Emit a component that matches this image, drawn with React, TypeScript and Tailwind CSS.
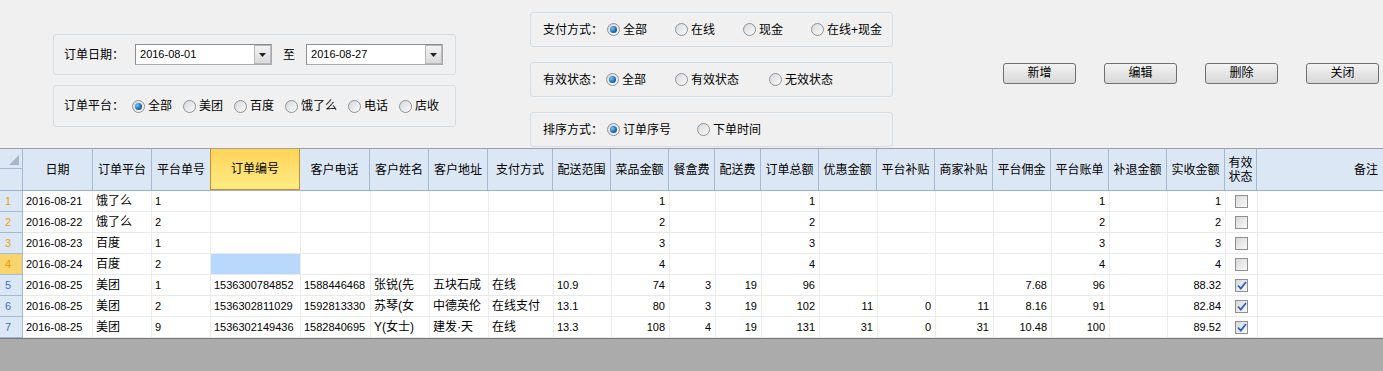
import React from 'react';

type Col = { t: string; w: number; align?: 'l' | 'r' };

const cols: Col[] = [
  { t: '日期', w: 70 },
  { t: '订单平台', w: 59 },
  { t: '平台单号', w: 59 },
  { t: '订单编号', w: 90 },
  { t: '客户电话', w: 70 },
  { t: '客户姓名', w: 59 },
  { t: '客户地址', w: 59 },
  { t: '支付方式', w: 65 },
  { t: '配送范围', w: 58 },
  { t: '菜品金额', w: 58, align: 'r' },
  { t: '餐盒费', w: 46, align: 'r' },
  { t: '配送费', w: 46, align: 'r' },
  { t: '订单总额', w: 58, align: 'r' },
  { t: '优惠金额', w: 58, align: 'r' },
  { t: '平台补贴', w: 58, align: 'r' },
  { t: '商家补贴', w: 58, align: 'r' },
  { t: '平台佣金', w: 58, align: 'r' },
  { t: '平台账单', w: 58, align: 'r' },
  { t: '补退金额', w: 58, align: 'r' },
  { t: '实收金额', w: 58, align: 'r' },
];

const rows: { cells: string[]; ok: boolean }[] = [
  { cells: ['2016-08-21', '饿了么', '1', '', '', '', '', '', '', '1', '', '', '1', '', '', '', '', '1', '', '1'], ok: false },
  { cells: ['2016-08-22', '饿了么', '2', '', '', '', '', '', '', '2', '', '', '2', '', '', '', '', '2', '', '2'], ok: false },
  { cells: ['2016-08-23', '百度', '1', '', '', '', '', '', '', '3', '', '', '3', '', '', '', '', '3', '', '3'], ok: false },
  { cells: ['2016-08-24', '百度', '2', '', '', '', '', '', '', '4', '', '', '4', '', '', '', '', '4', '', '4'], ok: false },
  { cells: ['2016-08-25', '美团', '1', '1536300784852', '1588446468', '张锐(先', '五块石成', '在线', '10.9', '74', '3', '19', '96', '', '', '', '7.68', '96', '', '88.32'], ok: true },
  { cells: ['2016-08-25', '美团', '2', '1536302811029', '1592813330', '苏琴(女', '中德英伦', '在线支付', '13.1', '80', '3', '19', '102', '11', '0', '11', '8.16', '91', '', '82.84'], ok: true },
  { cells: ['2016-08-25', '美团', '9', '1536302149436', '1582840695', 'Y(女士)', '建发·天', '在线', '13.3', '108', '4', '19', '131', '31', '0', '31', '10.48', '100', '', '89.52'], ok: true },
];

function Radio({ checked }: { checked?: boolean }) {
  return (
    <span className="flex h-[13px] w-[13px] shrink-0 items-center justify-center rounded-full border border-[#8d9196] bg-gradient-to-br from-[#d6d8db] to-[#fbfbfb]">
      {checked && <span className="h-[7px] w-[7px] rounded-full bg-[radial-gradient(circle_at_35%_35%,#7cc4f4,#1566b0_60%,#0b3f7a)]" />}
    </span>
  );
}

function RadioItem({ label, checked, w }: { label: string; checked?: boolean; w?: string }) {
  return (
    <div className={`flex items-center gap-[3px] ${w ?? ''}`}>
      <Radio checked={checked} />
      <span>{label}</span>
    </div>
  );
}

function FilterBox({ children, h }: { children: React.ReactNode; h: string }) {
  return (
    <div className={`flex items-center rounded-[3px] border border-[#d3dde6] bg-[#f0f0f0] ${h}`}>
      {children}
    </div>
  );
}

function DateInput({ value }: { value: string }) {
  return (
    <div className="flex h-[21px] w-[137px] items-stretch border border-[#a7abb0] border-l-[#8a8f96] border-t-[#8a8f96] bg-white">
      <span className="flex-1 pl-[4px] text-[11px] leading-[19px]">{value}</span>
      <span className="flex w-[17px] items-center justify-center border border-[#b4b8bd] bg-gradient-to-b from-[#f4f4f4] to-[#d9d9d9]">
        <svg width="7" height="4" viewBox="0 0 7 4"><path d="M0 0h7L3.5 4z" fill="#222" /></svg>
      </span>
    </div>
  );
}

function Btn({ label }: { label: string }) {
  return (
    <button className="h-[21px] w-[73px] rounded-[3px] border border-[#707070] bg-gradient-to-b from-[#f3f3f3] to-[#d8d8d8] text-[12px] leading-[19px] text-black">
      {label}
    </button>
  );
}

function Check({ on }: { on: boolean }) {
  return (
    <span className="flex h-[13px] w-[13px] items-center justify-center border border-[#8f8f8f] bg-gradient-to-br from-[#d8d8d8] to-[#fafafa]">
      {on && (
        <svg width="10" height="9" viewBox="0 0 10 9">
          <path d="M1 4.5 L3.8 7.5 L9 1" stroke="#2e5ec4" strokeWidth="1.8" fill="none" />
        </svg>
      )}
    </span>
  );
}

export default function App() {
  return (
    <div className="flex h-[371px] w-[1383px] flex-col overflow-hidden bg-[#f0f0f0] font-['Liberation_Sans','Noto_Sans_CJK_SC',sans-serif] text-[12px] text-black">
      {/* Filters */}
      <div className="flex h-[148px] shrink-0 items-start">
        <div className="ml-[53px] mt-[34px] flex w-[403px] flex-col gap-[10px]">
          <FilterBox h="h-[41px]">
            <span className="ml-[10px] mr-[11px]">订单日期：</span>
            <DateInput value="2016-08-01" />
            <span className="mx-[11px]">至</span>
            <DateInput value="2016-08-27" />
          </FilterBox>
          <FilterBox h="h-[42px]">
            <span className="ml-[10px] mr-[8px]">订单平台：</span>
            <div className="flex items-center gap-[11px]">
              <RadioItem label="全部" checked />
              <RadioItem label="美团" />
              <RadioItem label="百度" />
              <RadioItem label="饿了么" />
              <RadioItem label="电话" />
              <RadioItem label="店收" />
            </div>
          </FilterBox>
        </div>

        <div className="ml-[74px] mt-[12px] flex w-[363px] flex-col gap-[15px]">
          <FilterBox h="h-[35px]">
            <span className="ml-[12px] mr-[4px]">支付方式：</span>
            <RadioItem label="全部" checked w="w-[68px]" />
            <RadioItem label="在线" w="w-[68px]" />
            <RadioItem label="现金" w="w-[68px]" />
            <RadioItem label="在线+现金" />
          </FilterBox>
          <FilterBox h="h-[35px]">
            <span className="ml-[12px] mr-[3px]">有效状态：</span>
            <RadioItem label="全部" checked w="w-[69px]" />
            <RadioItem label="有效状态" w="w-[94px]" />
            <RadioItem label="无效状态" />
          </FilterBox>
          <FilterBox h="h-[35px]">
            <span className="ml-[12px] mr-[4px]">排序方式：</span>
            <RadioItem label="订单序号" checked w="w-[90px]" />
            <RadioItem label="下单时间" />
          </FilterBox>
        </div>

        <div className="ml-[110px] mt-[63px] flex gap-[28px]">
          <Btn label="新增" />
          <Btn label="编辑" />
          <Btn label="删除" />
          <Btn label="关闭" />
        </div>
      </div>

      {/* Grid */}
      <div className="shrink-0 border-t border-[#a0a0a0] bg-white">
        <div className="flex h-[42px] border-b border-[#9cb0c9] bg-[#dce7f5]">
          <div className="flex w-[23px] shrink-0 flex-col border-r border-[#a5b9d2]">
            <div className="flex h-[20px] items-end justify-end border-b border-[#a5b9d2] pb-[3px] pr-[3px]">
              <svg width="10" height="10" viewBox="0 0 10 10"><path d="M10 0V10H0z" fill="#a7b7cb" /></svg>
            </div>
            <div className="flex-1" />
          </div>
          {cols.map((c) => (
            <div
              key={c.t}
              style={{ width: c.w }}
              className={`flex shrink-0 items-center justify-center border-r ${
                c.t === '订单编号'
                  ? 'border-l border-b border-[#c8902c] bg-gradient-to-b from-[#ffd357] to-[#ffec85] -ml-px'
                  : 'border-[#a5b9d2]'
              }`}
            >
              {c.t}
            </div>
          ))}
          <div className="flex w-[32px] shrink-0 flex-col items-center justify-center border-r border-[#a5b9d2] leading-[14px]">
            <span>有效</span>
            <span>状态</span>
          </div>
          <div className="flex flex-1 items-center justify-end pr-[5px]">备注</div>
        </div>

        {rows.map((r, i) => (
          <div key={i} className="flex h-[21px] border-b border-[#e9e9e9]">
            <div
              className={`flex w-[23px] shrink-0 items-center border-r border-b border-[#a5b9d2] pl-[5px] -mb-px ${
                i === 3 ? 'bg-[#f9d56f] text-[#e59a00]' : i < 3 ? 'bg-[#dce7f5] text-[#f0a000]' : 'bg-[#dce7f5] text-[#3f72b5]'
              } text-[11px]`}
            >
              {i + 1}
            </div>
            {cols.map((c, j) => {
              const v = r.cells[j];
              const ascii = /^[\x00-\x7f]*$/.test(v);
              return (
                <div
                  key={j}
                  style={{ width: c.w }}
                  className={`flex shrink-0 items-center overflow-hidden whitespace-nowrap border-r border-[#ececec] ${
                    c.align === 'r' ? 'justify-end pr-[4px]' : 'pl-[3px]'
                  } ${ascii ? 'text-[11px]' : 'text-[12px]'} ${i === 3 && j === 3 ? 'bg-[#b9d9fc]' : ''}`}
                >
                  {v}
                </div>
              );
            })}
            <div className="flex w-[32px] shrink-0 items-center justify-center border-r border-[#ececec]">
              <Check on={r.ok} />
            </div>
            <div className="flex-1" />
          </div>
        ))}
      </div>

      <div className="flex-1 border-t border-[#777777] bg-[#ababab]" />
    </div>
  );
}
